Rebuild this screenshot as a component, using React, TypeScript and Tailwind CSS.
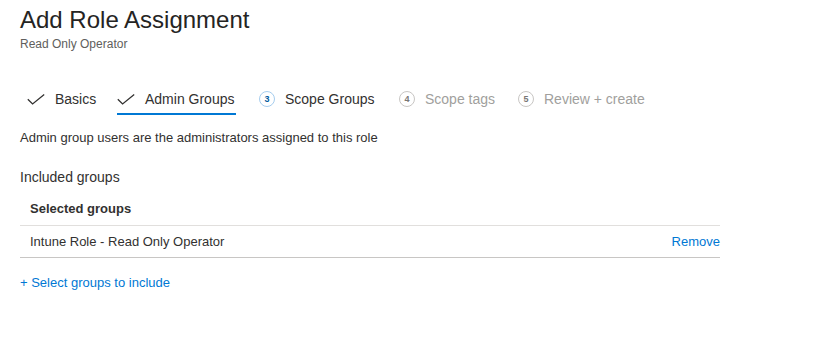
import React from "react";

type Step = {
  label: string;
  state: "done" | "current" | "todo";
  num?: number;
  box: string;
};

// widths/margins follow the reference tab positions
const steps: Step[] = [
  { label: "Basics", state: "done", box: "ml-[7px] w-[65px]" },
  { label: "Admin Groups", state: "done", box: "ml-[25px] w-[119px]" },
  { label: "Scope Groups", state: "current", num: 3, box: "ml-[23px] w-[114px]" },
  { label: "Scope tags", state: "todo", num: 4, box: "ml-[26px] w-[94px]" },
  { label: "Review + create", state: "todo", num: 5, box: "ml-[25px] w-[126px]" },
];

function CheckMark() {
  return (
    <svg width="18" height="11" viewBox="0 0 18 11" fill="none" className="shrink-0">
      <path d="M0.8 5.2 L5.6 10 L17.2 0.6" stroke="#323130" strokeWidth="1.3" />
    </svg>
  );
}

function StepNumber({ num, active }: { num: number; active: boolean }) {
  return (
    <span
      className={
        active
          ? "flex h-4 w-4 shrink-0 items-center justify-center rounded-full border border-[#a6cdee] text-[9px] font-bold leading-none text-[#005a9e]"
          : "flex h-4 w-4 shrink-0 items-center justify-center rounded-full border border-[#c8c6c4] text-[9px] font-bold leading-none text-[#797775]"
      }
    >
      {num}
    </span>
  );
}

export default function App() {
  return (
    <div className="h-[354px] w-[814px] overflow-hidden bg-white px-5 font-['Liberation_Sans',Arial,sans-serif] text-[#323130]">
      {/* Header */}
      <h1 className="pt-1 text-[24px] font-normal leading-8 text-[#252423]">Add Role Assignment</h1>
      <p className="text-[12px] leading-4 text-[#605e5c]">Read Only Operator</p>

      {/* Wizard steps */}
      <div className="mt-[33px] flex items-start">
        {steps.map((step, i) => (
          <div
            key={step.label}
            className={
              i === 1
                ? `flex h-[30px] items-center border-b-2 border-[#0078d4] ${step.box}`
                : `flex h-[30px] items-center border-b-2 border-transparent ${step.box}`
            }
          >
            {step.state === "done" ? (
              <span className="flex items-center gap-[10px]">
                <CheckMark />
                <span className="whitespace-nowrap text-[14px] leading-5 text-[#323130]">{step.label}</span>
              </span>
            ) : (
              <span className="flex items-center gap-[10px]">
                <StepNumber num={step.num ?? 0} active={step.state === "current"} />
                <span
                  className={
                    step.state === "current"
                      ? "whitespace-nowrap text-[14px] leading-5 text-[#323130]"
                      : "whitespace-nowrap text-[14px] leading-5 text-[#a19f9d]"
                  }
                >
                  {step.label}
                </span>
              </span>
            )}
          </div>
        ))}
      </div>

      <p className="mt-[14px] text-[13px] leading-[18px]">
        Admin group users are the administrators assigned to this role
      </p>

      <p className="mt-5 text-[14px] leading-5 text-[#323130]">Included groups</p>

      {/* Groups table */}
      <div className="w-[700px]">
        <div className="mt-[6px] flex h-[33px] items-center border-b border-[#e1dfdd] pl-[10px] text-[13px] font-semibold text-[#323130]">
          Selected groups
        </div>
        <div className="flex h-[32px] items-center justify-between border-b border-[#c8c6c4] pl-[10px] text-[13px]">
          <span>Intune Role - Read Only Operator</span>
          <span className="text-[#0078d4]">Remove</span>
        </div>
      </div>

      <p className="mt-[15px] text-[13px] leading-5 text-[#0078d4]">+ Select groups to include</p>
    </div>
  );
}
